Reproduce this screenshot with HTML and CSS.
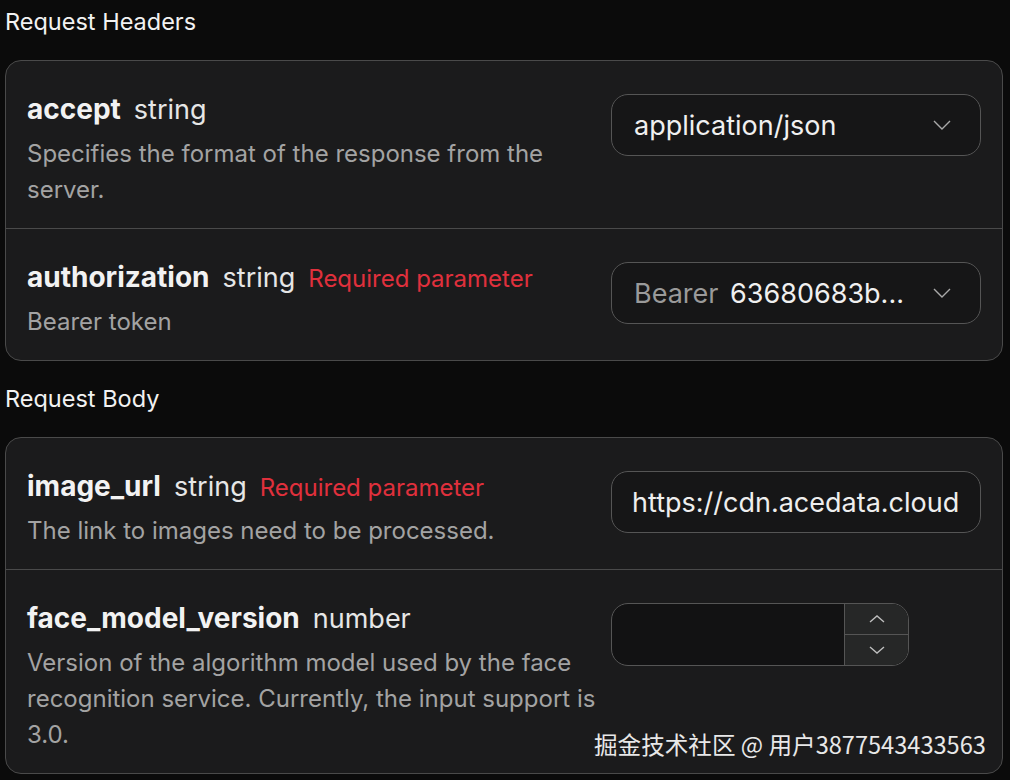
FILE: index.html
```html
<!DOCTYPE html>
<html lang="en">
<head>
<meta charset="utf-8">
<title>Request Parameters</title>
<link rel="stylesheet" href="styles.css">
</head>
<body>
<main class="page">
  <h2 class="section-title">Request Headers</h2>
  <section class="card">
    <div class="row">
      <div class="info">
        <div class="head"><span class="name">accept</span><span class="type">string</span></div>
        <p class="desc">Specifies the format of the response from the server.</p>
      </div>
      <div class="control">
        <div class="field select">
          <span class="value">application/json</span>
          <svg class="chev" width="20" height="12" viewBox="0 0 20 12"><path d="M2 2 L10 10 L18 2" fill="none" stroke="#a9a9a9" stroke-width="1.4"/></svg>
        </div>
      </div>
    </div>
    <div class="row">
      <div class="info">
        <div class="head"><span class="name">authorization</span><span class="type">string</span><span class="req">Required parameter</span></div>
        <p class="desc">Bearer token</p>
      </div>
      <div class="control">
        <div class="field select">
          <span class="value"><span class="muted">Bearer</span> 63680683b...</span>
          <svg class="chev" width="20" height="12" viewBox="0 0 20 12"><path d="M2 2 L10 10 L18 2" fill="none" stroke="#a9a9a9" stroke-width="1.4"/></svg>
        </div>
      </div>
    </div>
  </section>

  <h2 class="section-title">Request Body</h2>
  <section class="card">
    <div class="row">
      <div class="info">
        <div class="head"><span class="name">image_url</span><span class="type">string</span><span class="req">Required parameter</span></div>
        <p class="desc">The link to images need to be processed.</p>
      </div>
      <div class="control">
        <div class="field text">
          <span class="value url">https://cdn.acedata.cloud</span>
        </div>
      </div>
    </div>
    <div class="row">
      <div class="info">
        <div class="head"><span class="name">face_model_version</span><span class="type">number</span></div>
        <p class="desc">Version of the algorithm model used by the face recognition service. Currently, the input support is 3.0.</p>
      </div>
      <div class="control">
        <div class="number">
          <div class="num-input"></div>
          <div class="spin">
            <div class="spin-btn"><svg width="18" height="10" viewBox="0 0 18 10"><path d="M2 8 L9 2 L16 8" fill="none" stroke="#bdbdbd" stroke-width="1.4"/></svg></div>
            <div class="spin-btn"><svg width="18" height="10" viewBox="0 0 18 10"><path d="M2 2 L9 8 L16 2" fill="none" stroke="#bdbdbd" stroke-width="1.4"/></svg></div>
          </div>
        </div>
      </div>
    </div>
  </section>
  <div class="watermark">掘金技术社区 @ 用户3877543433563</div>
</main>
</body>
</html>
```

FILE: styles.css
```css
* { box-sizing: border-box; }
html, body { margin: 0; padding: 0; background: #0b0b0b; }
body {
  font-family: Inter, "Noto Sans", "Liberation Sans", sans-serif;
  color: #ececec;
  width: 1010px;
  height: 780px;
  overflow: hidden;
}
.page {
  position: relative;
  padding: 7px 7px 0 5px;
  height: 780px;
}
.section-title {
  margin: 0;
  font-size: 23.5px;
  font-weight: 400;
  line-height: 30px;
  color: #f2f2f2;
}
.section-title + .card { margin-top: 23px; }
.card + .section-title { margin-top: 23px; }
.card {
  background: #1b1b1c;
  border: 1.5px solid #4a4a4a;
  border-radius: 16px;
  overflow: hidden;
}
.row {
  display: grid;
  grid-template-columns: 1fr 370px;
  column-gap: 10px;
  padding: 30px 21px 20px 21px;
}
.row + .row { border-top: 1.5px solid #4a4a4a; }
.head {
  display: flex;
  align-items: baseline;
  gap: 13px;
  height: 36px;
  line-height: 36px;
  white-space: nowrap;
}
.head span { line-height: 36px; }
.name { font-weight: 700; font-size: 28px; color: #f2f2f2; }
.type { font-size: 27px; color: #e6e6e6; }
.req { font-size: 24px; color: #e0303c; }
.desc {
  margin: 9px 0 0;
  font-size: 24px;
  line-height: 36px;
  color: #a3a3a3;
}
.control { padding-top: 3px; }
.field {
  height: 62px;
  border: 1.5px solid #555;
  border-radius: 17px;
  background: #161617;
  display: flex;
  align-items: center;
  padding: 0 22px;
}
.select { justify-content: space-between; }
.select .value { font-size: 27px; color: #f0f0f0; white-space: nowrap; }
.muted { color: #9a9a9a; margin-right: 4px; }
.chev { margin-right: 6px; flex: none; }
.text { padding: 0 20px; }
.url { font-size: 27px; color: #eeeeee; white-space: nowrap; overflow: hidden; }
.number {
  width: 298px;
  height: 63px;
  display: flex;
  border: 1.5px solid #555;
  border-radius: 17px;
  overflow: hidden;
  background: #121213;
}
.num-input { flex: 1; }
.spin {
  width: 64px;
  display: flex;
  flex-direction: column;
  border-left: 1.5px solid #555;
}
.spin-btn {
  flex: 1;
  background: #262727;
  display: flex;
  align-items: center;
  justify-content: center;
}
.spin-btn + .spin-btn { border-top: 1.5px solid #555; }
.watermark {
  position: absolute;
  left: 594px;
  top: 729px;
  font-family: "Noto Sans CJK SC", "Noto Sans", sans-serif;
  font-size: 23.6px;
  line-height: 30px;
  color: #e8e8e8;
  white-space: nowrap;
}
```
